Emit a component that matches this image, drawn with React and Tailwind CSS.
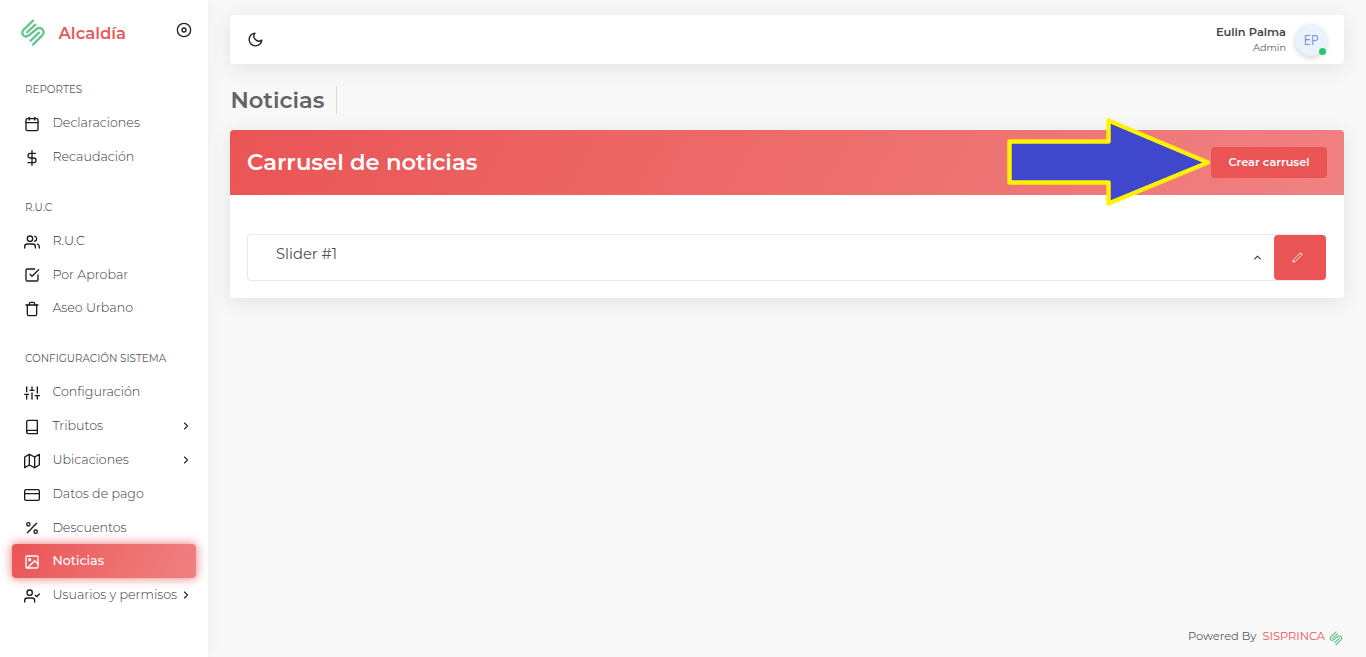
import {
  FiBook, FiCalendar, FiCheckSquare, FiChevronRight, FiChevronUp, FiCreditCard, FiDisc,
  FiDollarSign, FiEdit2, FiImage, FiMap, FiMoon, FiPercent, FiSliders, FiTrash, FiUserCheck, FiUsers,
} from "react-icons/fi";

const sections = [
  {
    title: "REPORTES",
    items: [
      { label: "Declaraciones", icon: FiCalendar },
      { label: "Recaudación", icon: FiDollarSign },
    ],
  },
  {
    title: "R.U.C",
    items: [
      { label: "R.U.C", icon: FiUsers },
      { label: "Por Aprobar", icon: FiCheckSquare },
      { label: "Aseo Urbano", icon: FiTrash },
    ],
  },
  {
    title: "CONFIGURACIÓN SISTEMA",
    items: [
      { label: "Configuración", icon: FiSliders },
      { label: "Tributos", icon: FiBook, more: true },
      { label: "Ubicaciones", icon: FiMap, more: true },
      { label: "Datos de pago", icon: FiCreditCard },
      { label: "Descuentos", icon: FiPercent },
      { label: "Noticias", icon: FiImage, active: true },
      { label: "Usuarios y permisos", icon: FiUserCheck, more: true },
    ],
  },
];

function Logo({ className }) {
  return (
    <svg viewBox="0 0 72 84" fill="none" stroke="#68c494" strokeWidth="7" strokeLinecap="round" strokeLinejoin="round" className={className}>
      <path d="M36 5 L9 31 Q0 41 7 49 Q15 56 25 48 L47 30 Q57 23 65 32 Q72 41 63 50 L36 77" />
      <path d="M43 17 L18 40" />
      <path d="M54 41 L29 65" />
    </svg>
  );
}

function MenuItem({ item }) {
  const Icon = item.icon;
  return (
    <li
      className={
        item.active
          ? "flex h-[33.8px] items-center rounded bg-linear-118 from-[#ea5455] to-[#f08182] pr-1 pl-3 text-white shadow-[0_0_10px_1px_rgba(234,84,85,0.7)]"
          : "flex h-[33.8px] items-center pr-1 pl-3 text-[#37353d]"
      }
    >
      <Icon className={item.active ? "mt-[2px] size-4 shrink-0" : "mt-[2px] size-4 shrink-0 text-[#1a1a1a]"} />
      <span className={`ml-[12.4px] pt-[1.4px] text-[12.65px] whitespace-nowrap ${item.active ? "font-medium" : "font-light"}`}>{item.label}</span>
      {item.more && <FiChevronRight className="mt-px ml-auto size-3 shrink-0 text-[#222]" strokeWidth="2.3" />}
    </li>
  );
}

export default function App() {
  return (
    <div className="flex h-[657px] w-full overflow-hidden bg-[#f8f8f8] font-['Montserrat','Inter',sans-serif] text-[#5a5865]">
      <aside className="z-10 w-[208px] shrink-0 bg-white px-3 shadow-[0_0_15px_0_rgba(34,41,47,0.05)]">
        <div className="flex h-14 pt-[19px] pl-2">
          <Logo className="ml-[0.5px] h-7 w-6" />
          <span className="ml-[14px] text-[16.5px] leading-[28px] font-semibold text-[#e65a5b]">Alcaldía</span>
          <FiDisc className="mt-[2.5px] mr-1 ml-auto size-4 text-[#222]" />
        </div>
        {sections.map((section) => (
          <section key={section.title}>
            <h2 className="h-[50.1px] pt-[25px] pl-[13px] text-[10.36px] leading-[17px] whitespace-nowrap">{section.title}</h2>
            <ul>{section.items.map((item) => <MenuItem key={item.label} item={item} />)}</ul>
          </section>
        ))}
      </aside>

      <div className="flex min-w-0 flex-1 flex-col px-[22px]">
        <header className="mt-[15px] flex h-[49px] items-center rounded bg-white px-[17px] shadow-[0_4px_20px_0_rgba(34,41,47,0.1)]">
          <FiMoon className="size-[17px] text-[#222]" />
          <div className="mt-[2px] ml-auto text-right">
            <p className="text-[11.4px] leading-[15px] font-semibold text-[#45434d]">Eulin Palma</p>
            <p className="text-[9.7px] leading-[16px]">Admin</p>
          </div>
          <div className="relative ml-[9px] flex size-8 items-center justify-center rounded-full bg-[#e9f3fe] font-['Open_Sans'] text-[14px] text-[#7d93dd] shadow-[0_2px_5px_rgba(34,41,47,0.2)]">
            <span className="inline-block scale-x-95">EP</span>
            <span className="absolute right-[1px] bottom-[1px] size-[7px] rounded-full bg-[#28c76f]" />
          </div>
        </header>

        <div className="mt-[22px] flex h-[28px] items-center">
          <h1 className="border-r border-[#d6dce1] pr-3 pl-[0.5px] text-[22.6px] leading-[28px] font-semibold text-[#636363]">Noticias</h1>
        </div>

        <main className="mt-4 h-[168px] rounded bg-white shadow-[0_4px_20px_0_rgba(34,41,47,0.1)]">
          <div className="relative flex h-[65px] items-center justify-between rounded-t bg-linear-118 from-[#ea5455] to-[#f08182] px-[17px]">
            <h2 className="text-[22.7px] font-semibold text-white">Carrusel de noticias</h2>
            <button className="h-[31px] w-[116px] rounded bg-[#ea5455] text-[11.3px] font-semibold text-white">Crear carrusel</button>
            <svg viewBox="1000 110 220 100" className="absolute top-[-20px] right-[124px] h-[100px] w-[220px]">
              <path d="M1009.5 141.5H1108.5V120.5L1208 162.5L1108.5 203.5V182.5H1009.5Z" fill="#3f48cc" stroke="#fff200" strokeWidth="4.5" strokeLinejoin="round" />
            </svg>
          </div>
          <div className="mt-[39px] mr-[18px] ml-[17px] flex h-[47px] rounded border border-[#e9e9ec]">
            <span className="pt-[9px] pl-7 text-[14.7px] leading-[20px] text-[#4f4c58]">Slider #1</span>
            <FiChevronUp className="mt-[17px] mr-[11px] ml-auto size-[11px] text-[#333]" strokeWidth="2.3" />
            <button className="-mr-px flex h-[45px] w-[52px] items-center rounded bg-[#ea5455] pl-[17.5px] text-white">
              <FiEdit2 className="size-[11px]" strokeWidth="2" />
            </button>
          </div>
        </main>

        <footer className="mt-auto mb-[11px] flex h-[18px] items-center justify-end text-[11.4px]">
          <span>Powered By</span>
          <span className="ml-[6px] text-[#ea5455]">SISPRINCA</span>
          <Logo className="mt-[3px] mr-px ml-[4px] h-[15px] w-[14px]" />
        </footer>
      </div>
    </div>
  );
}
